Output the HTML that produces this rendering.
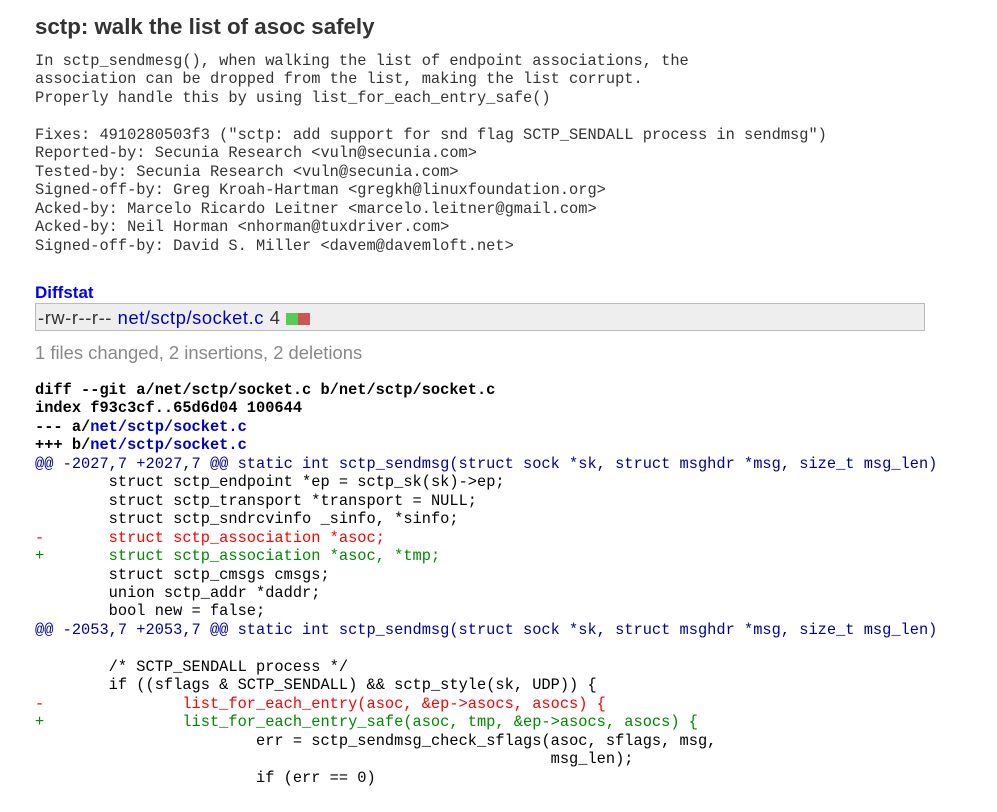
<!DOCTYPE html>
<html><head><meta charset="utf-8"><style>
body{margin:0;background:#fff;font-family:"Liberation Sans",sans-serif;color:#333;}
.t{position:absolute;left:35px;top:14px;font-size:22.3px;font-weight:bold;color:#333;margin:0}
pre{margin:0;font-family:"Liberation Mono",monospace;font-size:15.35px;line-height:18.45px;tab-size:8;-moz-tab-size:8;position:absolute;left:35px;white-space:pre}
.msg{top:52px;color:#333}
.ds{position:absolute;left:35px;top:283px;font-size:17px;font-weight:bold;color:#00f}
.box{position:absolute;left:35px;top:303px;background:#eee;border:1px solid #bbb;font-size:18.3px;line-height:27px;padding-left:2px;box-sizing:border-box;width:890px;height:28px;letter-spacing:0.6px}
.box a{color:#00c;text-decoration:none}
.g{display:inline-block;width:12px;height:12px;background:#5c5;vertical-align:-1px}
.r{display:inline-block;width:12px;height:12px;background:#c55;vertical-align:-1px}
.sum{position:absolute;left:35px;top:342px;font-size:18.4px;color:#888}
.diff{top:381px;color:#000}
.h{font-weight:bold}
.b{color:#00c}
.hk{color:#009}
.del{color:#f00}
.add{color:#080}
</style></head><body>
<div class="t">sctp: walk the list of asoc safely</div>
<pre class="msg">In sctp_sendmesg(), when walking the list of endpoint associations, the
association can be dropped from the list, making the list corrupt.
Properly handle this by using list_for_each_entry_safe()

Fixes: 4910280503f3 ("sctp: add support for snd flag SCTP_SENDALL process in sendmsg")
Reported-by: Secunia Research &lt;vuln@secunia.com&gt;
Tested-by: Secunia Research &lt;vuln@secunia.com&gt;
Signed-off-by: Greg Kroah-Hartman &lt;gregkh@linuxfoundation.org&gt;
Acked-by: Marcelo Ricardo Leitner &lt;marcelo.leitner@gmail.com&gt;
Acked-by: Neil Horman &lt;nhorman@tuxdriver.com&gt;
Signed-off-by: David S. Miller &lt;davem@davemloft.net&gt;</pre>
<div class="ds">Diffstat</div>
<div class="box">-rw-r--r-- <a>net/sctp/socket.c</a> 4 <span class="g"></span><span class="r"></span></div>
<div class="sum">1 files changed, 2 insertions, 2 deletions</div>
<pre class="diff"><span class="h">diff --git a/net/sctp/socket.c b/net/sctp/socket.c
index f93c3cf..65d6d04 100644
--- a/<span class="b">net/sctp/socket.c</span>
+++ b/<span class="b">net/sctp/socket.c</span></span>
<span class="hk">@@ -2027,7 +2027,7 @@ static int sctp_sendmsg(struct sock *sk, struct msghdr *msg, size_t msg_len)</span>
 	struct sctp_endpoint *ep = sctp_sk(sk)-&gt;ep;
 	struct sctp_transport *transport = NULL;
 	struct sctp_sndrcvinfo _sinfo, *sinfo;
<span class="del">-	struct sctp_association *asoc;</span>
<span class="add">+	struct sctp_association *asoc, *tmp;</span>
 	struct sctp_cmsgs cmsgs;
 	union sctp_addr *daddr;
 	bool new = false;
<span class="hk">@@ -2053,7 +2053,7 @@ static int sctp_sendmsg(struct sock *sk, struct msghdr *msg, size_t msg_len)</span>
 
 	/* SCTP_SENDALL process */
 	if ((sflags &amp; SCTP_SENDALL) &amp;&amp; sctp_style(sk, UDP)) {
<span class="del">-		list_for_each_entry(asoc, &amp;ep-&gt;asocs, asocs) {</span>
<span class="add">+		list_for_each_entry_safe(asoc, tmp, &amp;ep-&gt;asocs, asocs) {</span>
 			err = sctp_sendmsg_check_sflags(asoc, sflags, msg,
 							msg_len);
 			if (err == 0)</pre>
</body></html>
